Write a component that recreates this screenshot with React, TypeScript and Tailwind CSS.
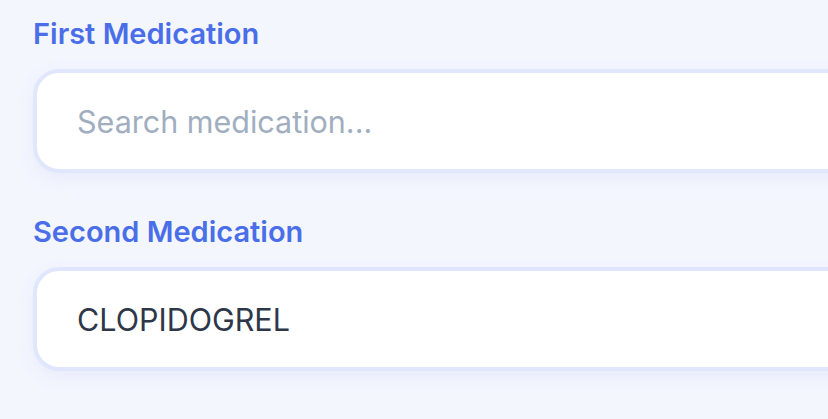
import React from "react";

function Field({ label, value, placeholder }: { label: string; value?: string; placeholder: string }) {
  return (
    <div>
      <label className="block text-[29px] font-semibold leading-[36px] text-[#4a6ee8]">
        {label}
      </label>
      <input
        readOnly
        value={value ?? ""}
        placeholder={placeholder}
        className="mt-[17px] block h-[104px] w-[1000px] rounded-[26px] border-4 border-[#e0e7fd] bg-white px-[40px] text-[30.5px] text-[#2d3748] shadow-[0_6px_18px_rgba(99,120,200,0.08)] outline-none placeholder:text-[#a0aec0]"
      />
    </div>
  );
}

export default function App() {
  return (
    <div
      className="h-screen w-screen overflow-hidden bg-[#f4f6fe] pl-[33px] pt-[16px]"
      style={{ fontFamily: "Inter, 'Noto Sans', sans-serif" }}
    >
      <div className="flex flex-col gap-[41px]">
        <Field label="First Medication" placeholder="Search medication..." />
        <Field label="Second Medication" value="CLOPIDOGREL" placeholder="Search medication..." />
      </div>
    </div>
  );
}
